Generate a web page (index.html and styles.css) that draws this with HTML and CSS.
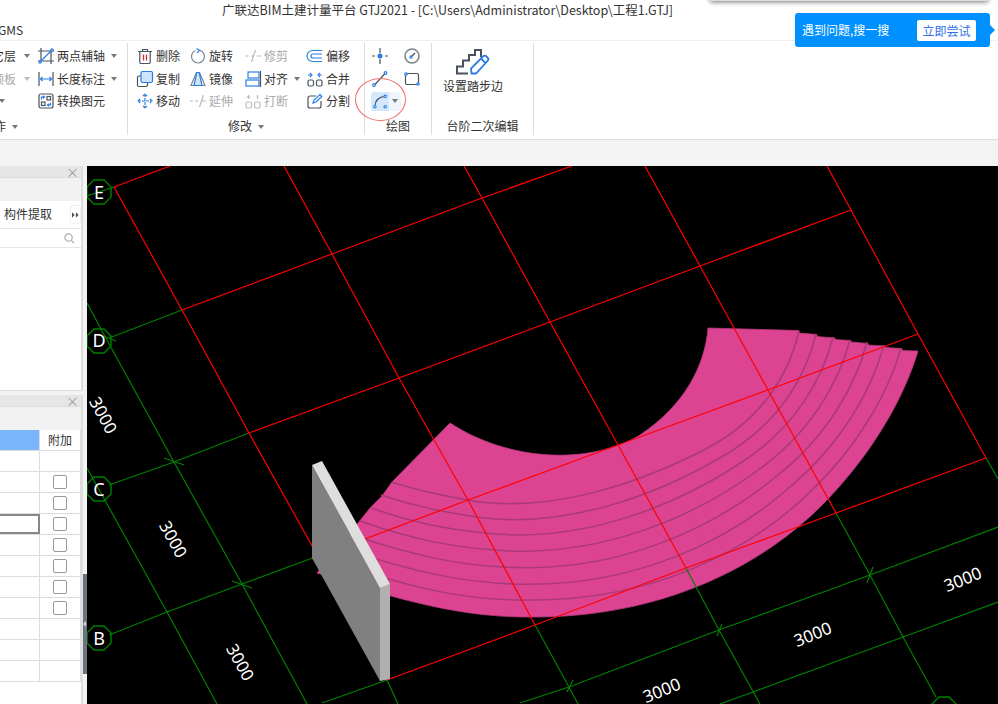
FILE: index.html
```html
<!DOCTYPE html>
<html lang="zh-CN">
<head>
<meta charset="utf-8">
<title>广联达BIM土建计量平台 GTJ2021</title>
<link rel="stylesheet" href="styles.css">
</head>
<body>
<div class="app">
  <div class="window-shadow"></div>
  <header class="titlebar">广联达BIM土建计量平台 GTJ2021 - [C:\Users\Administrator\Desktop\工程1.GTJ]</header>
  <nav class="menubar"><span class="menu-item">GMS</span></nav>
  <div class="bubble">
    <span class="bubble-text">遇到问题,搜一搜</span>
    <span class="bubble-btn">立即尝试</span>
  </div>
  <section class="ribbon">
    <div class="group g1">
      <div class="tools tools1">
        <div class="tool clip"><span>其它层</span><i class="caret"></i></div>
        <div class="tool"><svg class="ico" viewBox="0 0 16 16"><path class="dk" d="M0 3h16M3 0v13M13 3v13M0 13h16"/><path class="bl" d="M1.500 14.500L14.500 1.500"/><circle class="bl wf" cx="14" cy="2" r="1.200"/><circle class="bl wf" cx="2" cy="14" r="1.200"/></svg><span>两点辅轴</span><i class="caret"></i></div>
        <div class="tool clip off"><span>顶板</span><i class="caret"></i></div>
        <div class="tool"><svg class="ico" viewBox="0 0 16 16"><path class="dk" d="M1 1v14M15 1v14"/><path class="bl" d="M2 8h12M4.500 6L2.500 8l2 2M11.500 6l2 2-2 2"/></svg><span>长度标注</span><i class="caret"></i></div>
        <div class="tool clip shift"><i class="caret"></i></div>
        <div class="tool"><svg class="ico" viewBox="0 0 16 16"><rect class="dk" x="1" y="1" width="14" height="14" rx="2"/><rect class="dk" x="9" y="3.500" width="3.500" height="3.500"/><rect class="dk" x="3.500" y="9" width="3.500" height="3.500"/><path class="bl" d="M3.500 6.500V4h3M5 2.800L6.500 4 5 5.200M12.500 9.500V12h-3M11 13.200L9.500 12 11 10.800"/></svg><span>转换图元</span></div>
      </div>
      <div class="glabel shift-label"><span>操作</span><i class="caret"></i></div>
    </div>
    <div class="group g2">
      <div class="tools tools2">
        <div class="tool"><svg class="ico" viewBox="0 0 16 16"><path class="dk" d="M1 3.500h14M5.500 3.500V1.500h5v2M2.800 3.500v10.500a1.500 1.500 0 0 0 1.500 1.500h7.400a1.500 1.500 0 0 0 1.500-1.500V3.500"/><path class="rd" d="M6.500 6.500v6M9.500 6.500v6"/></svg><span>删除</span></div>
        <div class="tool"><svg class="ico" viewBox="0 0 16 16"><path class="gr" d="M9.500 2.200a6.500 6.500 0 1 1-4 .3"/><path class="bl" d="M6.500 0.500L9.500 2.300 7 4.800"/></svg><span>旋转</span></div>
        <div class="tool off"><svg class="ico" viewBox="0 0 16 16"><path class="lg" d="M0 8h3.500M6 8h3M11.500 8H16M10.500 2L6.500 14"/></svg><span>修剪</span></div>
        <div class="tool"><svg class="ico" viewBox="0 0 16 16"><path class="bl" d="M15 2.500H5.500a5.500 5.500 0 0 0 0 11H15M15 6H6a2 2 0 0 0 0 4h9"/></svg><span>偏移</span></div>
        <div class="tool"><svg class="ico" viewBox="0 0 16 16"><rect class="dk" x="0.500" y="5" width="10" height="10.500" rx="1.500"/><rect class="bl fill" x="4" y="0.500" width="11.500" height="11" rx="1.500"/></svg><span>复制</span></div>
        <div class="tool"><svg class="ico" viewBox="0 0 16 16"><path class="gr" d="M6.500 1.500L1 14.500h5.500zM9.500 1.500l5.500 13H9.500z"/><path class="bl fill" d="M6.800 1.500h2.400L12 14.500H4z"/></svg><span>镜像</span></div>
        <div class="tool"><svg class="ico wide" viewBox="0 0 16 16"><rect class="bl" x="3" y="1" width="11" height="6" /><rect class="bl" x="1" y="9" width="13" height="6"/><path class="dk" d="M15.500 0v16"/></svg><span>对齐</span><i class="caret"></i></div>
        <div class="tool"><svg class="ico" viewBox="0 0 16 16"><rect class="dk" x="1" y="9" width="5.500" height="6" rx="1.500"/><rect class="dk" x="9.500" y="9" width="5.500" height="6" rx="1.500"/><path class="bl" d="M1 4h3M3 1.800L5 4 3 6.200M15 4h-3M13 1.800L11 4l2 2.200"/></svg><span>合并</span></div>
        <div class="tool"><svg class="ico" viewBox="0 0 16 16"><path class="bl" d="M8 1v14M1 8h14M6 3l2-2 2 2M6 13l2 2 2-2M3 6L1 8l2 2M13 6l2 2-2 2" stroke-dasharray="3 1"/></svg><span>移动</span></div>
        <div class="tool off"><svg class="ico" viewBox="0 0 16 16"><path class="lg" d="M0 8h3M5 8h3M11.500 8H16M13.500 2l-4 12"/></svg><span>延伸</span></div>
        <div class="tool off"><svg class="ico" viewBox="0 0 16 16"><rect class="lg" x="1" y="9" width="5.500" height="6" rx="1.500"/><rect class="lg" x="9.500" y="9" width="5.500" height="6" rx="1.500"/><path class="lg" d="M3.500 2v4M1.500 4h4M12.500 2v4"/></svg><span>打断</span></div>
        <div class="tool"><svg class="ico" viewBox="0 0 16 16"><path class="dk" d="M9 3H3a2 2 0 0 0-2 2v8a2 2 0 0 0 2 2h9a2 2 0 0 0 2-2V8"/><path class="bl" d="M6 10l1-3 6-5.500 1.800 2L9 9z"/></svg><span>分割</span></div>
      </div>
      <div class="glabel"><span>修改</span><i class="caret"></i></div>
    </div>
    <div class="group g3">
      <div class="tools tools3">
        <svg class="ico" viewBox="0 0 16 16"><path class="dk" d="M8 0v5M8 11v5M0 8h3M13 8h3"/><circle class="blf" cx="8" cy="8" r="2.500"/></svg>
        <svg class="ico" viewBox="0 0 16 16"><circle class="gr w2" cx="8" cy="8" r="7"/><path class="dk" d="M7 9l4-4"/><circle class="bl wf" cx="7" cy="9" r="1.100"/></svg>
        <svg class="ico" viewBox="0 0 16 16"><path class="dk" d="M2.500 14L13.500 2"/><circle class="bl wf" cx="13.500" cy="2" r="1.300"/><circle class="bl wf" cx="2" cy="14" r="1.300"/></svg>
        <svg class="ico" viewBox="0 0 16 16"><rect class="dk" x="1.500" y="2.500" width="13" height="11" rx="1.500"/><circle class="bl wf" cx="2" cy="3" r="1.200"/><circle class="bl wf" cx="14" cy="13" r="1.200"/></svg>
        <div class="arc-btn">
          <span class="arc-main"><svg class="ico" viewBox="0 0 16 16"><path class="dk" d="M2 13C2.500 7 6.500 3 13 2.500"/><circle class="bl wf" cx="13" cy="2.500" r="1.300"/><circle class="bl wf" cx="2" cy="13.500" r="1.300"/><circle class="bl wf" cx="13" cy="13.500" r="1.300"/></svg></span>
          <span class="arc-more"><i class="caret"></i></span>
        </div>
      </div>
      <div class="glabel"><span>绘图</span></div>
      <div class="mark"></div>
    </div>
    <div class="group g4">
      <div class="big-tool">
        <svg class="stair" viewBox="0 0 33 26"><path class="st" d="M12 24.500H1V17.500H7V11.500H13V6H19V1H25V8"/><path class="bl thick" d="M15.500 24.500l-.500-5L27 7.500c1-1 2.500-1 3.500 0l1 1c1 1 1 2.500 0 3.500L20 24.500zM25 9.500l4.500 4.500"/></svg>
        <span>设置踏步边</span>
      </div>
      <div class="glabel"><span>台阶二次编辑</span></div>
    </div>
  </section>
  <div class="strip"></div>
  <main class="workspace">
    <aside class="side">
      <div class="panels">
        <div class="panel panel-top">
          <div class="phead"><span class="close">×</span></div>
          <div class="psub"></div>
          <div class="ptabs"><span>构件提取</span><span class="more"><svg viewBox="0 0 9 7" class="more-ico"><path d="M0 0l3.500 3.500L0 7zM5 0l3.500 3.500L5 7z"/></svg></span></div>
          <div class="psearch"><svg class="search-ico" viewBox="0 0 12 12"><circle cx="5" cy="5" r="4"/><path d="M8 8l3 3"/></svg></div>
        </div>
        <div class="panel panel-bottom">
          <div class="phead"><span class="close">×</span></div>
          <div class="psub sub2"></div>
          <div class="table">
            <div class="row head"><span class="c1 blue"></span><span class="c2">附加</span></div>
            <div class="row"><span class="c1"></span><span class="c2"></span></div>
            <div class="row"><span class="c1"></span><span class="c2"><i class="check"></i></span></div>
            <div class="row"><span class="c1"></span><span class="c2"><i class="check"></i></span></div>
            <div class="row"><span class="c1 selected"></span><span class="c2"><i class="check"></i></span></div>
            <div class="row"><span class="c1"></span><span class="c2"><i class="check"></i></span></div>
            <div class="row"><span class="c1"></span><span class="c2"><i class="check"></i></span></div>
            <div class="row"><span class="c1"></span><span class="c2"><i class="check"></i></span></div>
            <div class="row"><span class="c1"></span><span class="c2"><i class="check"></i></span></div>
            <div class="row"><span class="c1"></span><span class="c2"></span></div>
            <div class="row"><span class="c1"></span><span class="c2"></span></div>
            <div class="row"><span class="c1"></span><span class="c2"></span></div>
          </div>
        </div>
      </div>
      <div class="splitter"><i></i></div>
    </aside>
    <svg class="scene" viewBox="87 166 911 538" preserveAspectRatio="none">
      <!-- stair body -->
      <path class="pink" d="M708 328L799 330.500V333L817 334.500V336.500L835 338V339.500L851 340.500V342L868 343.500V345L885 346V347.500L902 348.500V350.500L918 351C905 395 875 450 827 500C770 560 670 618 530 617C475 617 420 608 317 573L327 560L338 547L349 534L358 523L370 508L382 496L392 482L450 423C510 462 590 465 640 435C685 405 705 365 708 328Z"/>
      <g class="tread">
        <path d="M799 331C790 370 765 420 700 452C640 482 550 515 467 500C440 495 415 490 392 482"/>
        <path d="M816 334C806 374 781 424 718 459C659 493 567 530 476 517C445 512 416 507 381 495"/>
        <path d="M833 337C823 377 796 429 736 466C677 504 584 544 485 533C450 530 416 524 371 508"/>
        <path d="M850 340C839 381 812 433 754 473C696 515 601 559 494 550C455 547 417 541 360 521"/>
        <path d="M867 342C856 384 828 437 773 479C714 527 619 574 503 567C460 565 418 557 349 534"/>
        <path d="M884 345C872 388 844 441 791 486C733 538 636 589 512 584C465 582 419 574 338 547"/>
        <path d="M901 348C889 391 859 446 809 493C751 549 653 603 521 600C470 600 419 591 328 560"/>
      </g>
      <!-- green axes -->
      <g class="axis-g">
        <path d="M87 196L114 187"/>
        <path d="M109 338L182 310"/>
        <path d="M109 485L174 462L249 433"/>
        <path d="M109 635L167 612L242 584L318 556"/>
        <path d="M322 703L387 680"/>
        <path d="M87 303L102 331L174 462L242 584L307 704"/>
        <path d="M87 468L167 612L217 704"/>
        <path d="M387 680L398 704"/>
        <path d="M535 625L569 687L578 704"/>
        <path d="M686 568L719 630L760 704"/>
        <path d="M836 513L870 575L903 637L936 697"/>
        <path d="M986 458L998 479"/>
        <path d="M520 703L569 687L719 630L870 575L998 527"/>
        <path d="M720 704L753 692L903 637L998 602"/>
        <path d="M103 336L116 341M164 458L184 465M232 581L252 588M567 692L573 680M717 636L722 624M867 583L873 567"/>
      </g>
      <!-- red grid -->
      <g class="axis-r">
        <path d="M114 187L170 166"/>
        <path d="M182 310L332 254L482 198L572 166"/>
        <path d="M249 433L399 378L550 322L700 266L851 210"/>
        <path d="M312 559L468 500L618 445L768 390L918 334"/>
        <path d="M387 680L535 625L686 568L836 513L986 458"/>
        <path d="M114 187L182 310L249 433L387 680"/>
        <path d="M284 166L332 254L399 378L468 500L535 625"/>
        <path d="M464 166L482 198L550 322L618 445L686 568"/>
        <path d="M645 166L700 266L768 390L836 513"/>
        <path d="M827 166L851 210L918 334L986 458"/>
      </g>
      <!-- grid bubbles -->
      <g class="bubble-g">
        <path d="M94 180h10l7 7v10l-7 7H94l-7-7v-10z" transform="translate(0 0)"/>
        <path d="M94 329h10l7 7v10l-7 7H94l-7-7v-10z"/>
        <path d="M94 477h10l7 7v10l-7 7H94l-7-7v-10z"/>
        <path d="M94 626h10l7 7v10l-7 7H94l-7-7v-10z"/>
        <path d="M939 697h10l7 7v10h-24v-10z"/>
      </g>
      <g class="axis-name">
        <text x="99" y="199">E</text>
        <text x="99" y="347">D</text>
        <text x="99" y="496">C</text>
        <text x="99" y="645">B</text>
      </g>
      <g class="dim">
        <text transform="translate(95 413) rotate(61)" text-anchor="middle" y="0" x="6">3000</text>
        <text transform="translate(165 537) rotate(61)" text-anchor="middle" x="6">3000</text>
        <text transform="translate(232 660) rotate(61)" text-anchor="middle" x="6">3000</text>
        <text transform="translate(664 696) rotate(-22)" text-anchor="middle">3000</text>
        <text transform="translate(815 640) rotate(-22)" text-anchor="middle">3000</text>
        <text transform="translate(965 585) rotate(-22)" text-anchor="middle">3000</text>
      </g>
      <!-- wall -->
      <path class="wall-front" d="M312 465L380 588V681L312 558Z"/>
      <path class="wall-side" d="M380 588L390 584V679L380 681Z"/>
      <path class="wall-top" d="M312 465L322 461L390 584L380 588Z"/>
    </svg>
  </main>
</div>
</body>
</html>
```
FILE: styles.css
```css
* { box-sizing: border-box; }
html, body { margin: 0; height: 100%; }
body {
  overflow: hidden;
  background: #fff;
  color: #333;
  font: 12px/1.2 "Noto Sans CJK SC", "Noto Sans", sans-serif;
}
.app {
  position: relative;
  width: 998px;
  height: 704px;
  display: flex;
  flex-direction: column;
  overflow: hidden;
}
.window-shadow {
  position: absolute;
  left: 710px;
  top: -10px;
  width: 278px;
  height: 11px;
  background: #ddd;
  box-shadow: 0 1px 5px rgba(0, 0, 0, .55);
}
.titlebar {
  height: 20px;
  line-height: 20px;
  padding-left: 222px;
  font-size: 12.500px;
  white-space: nowrap;
}
.menubar {
  height: 21px;
  line-height: 20px;
  font-size: 12px;
  border-bottom: 1px solid #f0f0f0;
}
.menu-item { display: block; margin-left: -2px; }

.bubble {
  position: absolute;
  left: 795px;
  top: 13px;
  width: 195px;
  height: 34px;
  display: flex;
  align-items: center;
  padding-left: 7px;
  border-radius: 3px;
  background: #0090ff;
  color: #fff;
}
.bubble::after {
  content: "";
  position: absolute;
  left: 100%;
  top: 12px;
  border-left: 5px solid #0090ff;
  border-top: 5px solid transparent;
  border-bottom: 5px solid transparent;
}
.bubble-text { width: 115px; white-space: nowrap; }
.bubble-btn {
  width: 59px;
  height: 21px;
  line-height: 21px;
  text-align: center;
  border-radius: 2px;
  background: #fff;
  color: #2f6fe8;
}

.ribbon {
  height: 99px;
  display: flex;
  padding-top: 2px;
  border-bottom: 1px solid #ddd;
  background: #fff;
}
.group {
  position: relative;
  height: 92px;
  display: flex;
  flex-direction: column;
  border-right: 1px solid #ddd;
}
.g1 { width: 128px; }
.g2 { width: 237px; }
.g3 { width: 67px; }
.g4 { width: 102px; }
.tools { display: grid; padding-top: 2px; grid-auto-rows: 22.500px; }
.tools1 { grid-template-columns: 38px 88px; }
.tools2 { grid-template-columns: 53px 55px 62px 56px; padding-left: 9px; }
.tools3 {
  grid-template-columns: 16px 16px;
  column-gap: 16px;
  align-items: center;
  padding-left: 7px;
}
.tool {
  display: flex;
  align-items: center;
  gap: 3px;
  white-space: nowrap;
}
.tool.off { color: #aaa; }
.tool.off .caret { border-top-color: #bbb; }
.clip { justify-content: flex-end; padding-right: 8px; gap: 5px; }
.shift { padding-right: 33px; }
.caret {
  display: inline-block;
  margin-left: 3px;
  border-top: 4px solid #777;
  border-left: 3px solid transparent;
  border-right: 3px solid transparent;
}
.ico { display: block; width: 16px; height: 16px; flex: none; overflow: visible; }
.wide { margin-right: 0; }
svg path, svg rect, svg circle { fill: none; vector-effect: none; }
.dk { stroke: #4a5260; stroke-width: 1.200; }
.bl { stroke: #2a7de1; stroke-width: 1.200; }
.rd { stroke: #d92c2c; stroke-width: 1.300; }
.gr { stroke: #7d8590; stroke-width: 1.200; }
.lg { stroke: #bbb; stroke-width: 1.200; }
.w2 { stroke-width: 1.600; }
.wf { fill: #fff; }
svg .fill { fill: #cfe4fb; }
svg .blf { fill: #2a7de1; }
.glabel {
  margin-top: auto;
  height: 17px;
  line-height: 16px;
  text-align: center;
  white-space: nowrap;
}
.glabel .caret { margin-left: 6px; vertical-align: 2px; }
.shift-label { text-align: left; margin-left: -18px; }
.arc-btn {
  grid-column: span 2;
  display: flex;
  width: 30px;
  height: 19px;
  margin-left: -1px;
  border-radius: 3px;
  overflow: hidden;
  background: #eef5fd;
}
.arc-main {
  width: 18px;
  display: flex;
  align-items: center;
  justify-content: center;
  background: #d4e8fc;
}
.arc-main .ico { width: 15px; height: 15px; }
.arc-more { flex: 1; display: flex; align-items: center; justify-content: center; }
.arc-more .caret { margin: 0; }
.mark {
  position: absolute;
  left: -10px;
  top: 35px;
  width: 51px;
  height: 43px;
  border: 1px solid #f06a6a;
  border-radius: 50%;
}
.big-tool {
  display: flex;
  flex-direction: column;
  align-items: flex-start;
  padding: 6px 0 0 11px;
  white-space: nowrap;
}
.stair { width: 33px; height: 26px; margin: 0 0 4px 13px; overflow: visible; }
.st { stroke: #4a5260; stroke-width: 2; }
.thick { stroke-width: 1.800; }

.strip { height: 26px; background: #f3f3f3; }
.workspace { flex: 1; display: flex; min-height: 0; }
.side { width: 87px; display: flex; background: #f3f3f3; }
.panels { width: 83px; display: flex; flex-direction: column; }
.panel { border-right: 2px solid #ddd; background: #fff; }
.panel-top { height: 225px; border-bottom: 1px solid #ddd; }
.panel-bottom { flex: 1; margin-top: 4px; }
.phead {
  height: 12px;
  display: flex;
  align-items: center;
  justify-content: flex-end;
  padding-right: 2px;
  background: #e6e6e6;
  border-bottom: 1px solid #ddd;
}
.close { font-size: 13px; line-height: 12px; color: #999; }
.psub { height: 23px; background: #f1f1f1; }
.sub2 { height: 23px; }
.ptabs {
  height: 28px;
  display: flex;
  align-items: center;
  justify-content: space-between;
  padding: 0 0 0 4px;
  border-bottom: 1px solid #e6e6e6;
  white-space: nowrap;
}
.more {
  width: 11px;
  height: 19px;
  display: flex;
  align-items: center;
  justify-content: center;
  border: 1px solid #eee;
  border-radius: 3px;
}
.more-ico { width: 7px; height: 6px; }
.more-ico path { fill: #4a5260; }
.psearch {
  height: 19px;
  display: flex;
  align-items: center;
  justify-content: flex-end;
  padding-right: 6px;
  border-bottom: 1px solid #e6e6e6;
}
.search-ico { width: 11px; height: 11px; }
.search-ico circle, .search-ico path { stroke: #aaa; stroke-width: 1.300; }
.table { width: 81px; border-right: 1px solid #ddd; }
.row {
  display: grid;
  grid-template-columns: 40px 40px;
  height: 21px;
  border-bottom: 1px solid #ddd;
}
.c1 { border-right: 1px solid #ddd; }
.c2 { display: flex; align-items: center; justify-content: center; }
.blue { background: #7ab5fb; }
.selected { border: 2px solid #888; border-left: 0; }
.check {
  width: 14px;
  height: 14px;
  border: 1px solid #999;
  border-radius: 2px;
  background: #fff;
}
.splitter {
  width: 4px;
  height: 100px;
  margin-top: 408px;
  display: flex;
  align-items: center;
  background: #6c7480;
}
.splitter i {
  border-right: 3px solid #cfd3d8;
  border-top: 3px solid transparent;
  border-bottom: 3px solid transparent;
}

.scene { width: 911px; height: 538px; display: block; background: #000; flex: none; }
.pink { fill: #dc4391; stroke: #b83a7c; stroke-width: .8; }
.tread path { stroke: #a83a78; stroke-width: 1.500; }
.axis-g path { stroke: #008000; stroke-width: 1.200; }
.axis-r path { stroke: #ff0000; stroke-width: 1.200; }
.bubble-g path { stroke: #008000; stroke-width: 1.400; }
.axis-name text { fill: #fff; font: 18px "Noto Sans", sans-serif; text-anchor: middle; }
.dim text { fill: #fff; font: 17px "Noto Sans", sans-serif; }
svg .wall-front { fill: #808080; }
svg .wall-side { fill: #b0b0b0; }
svg .wall-top { fill: #dedede; }
```
